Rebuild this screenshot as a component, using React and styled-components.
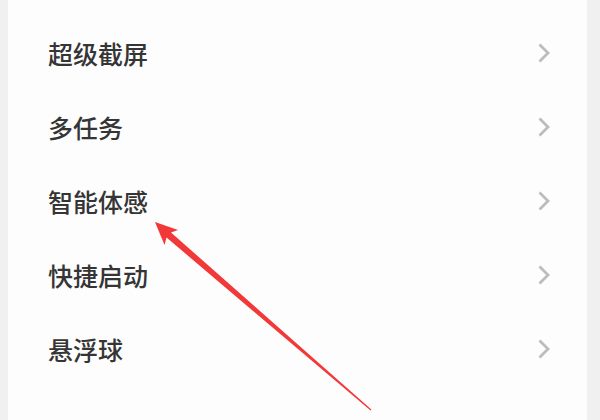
import styled, { createGlobalStyle } from 'styled-components'

const Global = createGlobalStyle`
  body {
    margin: 0;
    font-family: "Noto Sans CJK SC", "Noto Sans", sans-serif;
  }
`

const Page = styled.div`
  position: relative;
  width: 600px;
  height: 420px;
  box-sizing: border-box;
  padding: 0 13px 0 8px;
  background: #f0f0f0;
  overflow: hidden;
`

const Card = styled.div`
  height: 100%;
  background: #fdfdfd;
  padding-top: 16px;
  box-sizing: border-box;
`

const Row = styled.div`
  height: 74px;
  display: flex;
  align-items: center;
  justify-content: space-between;
  padding: 0 36px 0 40px;
`

const Label = styled.span`
  font-size: 25px;
  font-weight: 500;
  color: #353535;
`

const Chevron = () => (
  <svg width="14" height="22" viewBox="0 0 14 22">
    <path d="M2.5 2.5 L11 11 L2.5 19.5" fill="none" stroke="#bcbcbc" strokeWidth="2.8" />
  </svg>
)

const Arrow = styled.svg`
  position: absolute;
  left: 0;
  top: 0;
  pointer-events: none;
`

const items = ['超级截屏', '多任务', '智能体感', '快捷启动', '悬浮球']

export default function App() {
  return (
    <>
      <Global />
      <Page>
        <Card>
          {items.map((t) => (
            <Row key={t}>
              <Label>{t}</Label>
              <Chevron />
            </Row>
          ))}
        </Card>
        <Arrow width="600" height="420" viewBox="0 0 600 420">
          <polygon
            points="155,222 178,230 171,232.5 371.4,409.4 370.6,410.6 166.5,237.5 164.5,245"
            fill="#f23838"
          />
        </Arrow>
      </Page>
    </>
  )
}
